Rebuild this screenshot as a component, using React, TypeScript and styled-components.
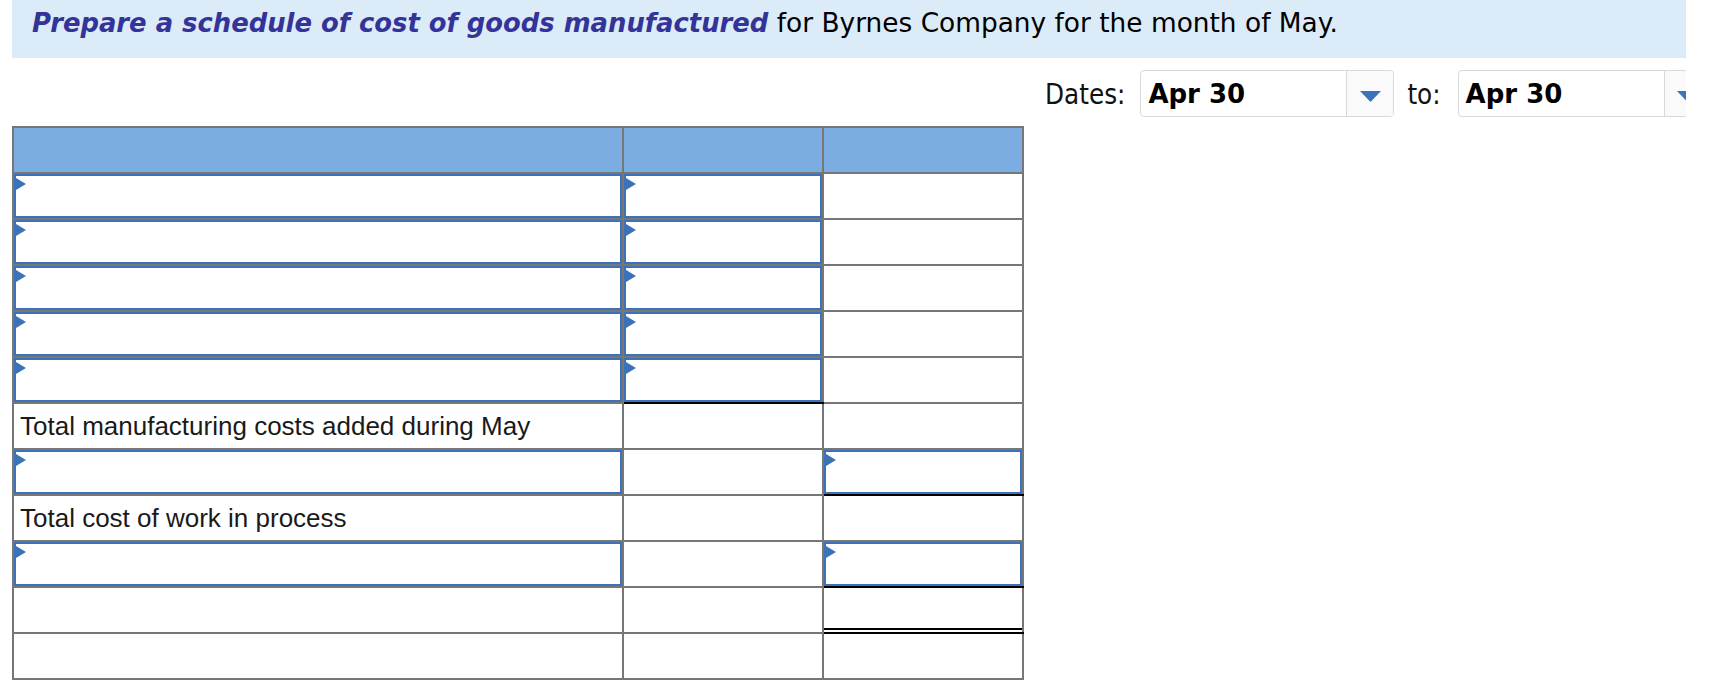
import React from 'react';
import styled, { createGlobalStyle, css } from 'styled-components';

const GlobalStyle = createGlobalStyle`
    html,
    body {
        margin: 0;
        padding: 0;
        background: #fff;
    }
    body {
        font-family: 'Liberation Sans', Arial, sans-serif;
    }
`;

const Page = styled.div`
    width: 1674px;
    margin-left: 12px;
    overflow: hidden;
`;

const Banner = styled.div`
    height: 58px;
    box-sizing: border-box;
    padding: 8px 0 0 20px;
    background-color: #dcebf8;
    font-family: 'DejaVu Sans', Verdana, sans-serif;
    font-size: 26.4px;
    line-height: 30px;
    color: #000;
    white-space: nowrap;
`;

const Lead = styled.span`
    font-size: 25.85px;
    font-weight: bold;
    font-style: italic;
    color: #333399;
`;

const DateBar = styled.div`
    display: flex;
    align-items: center;
    height: 47px;
    margin-top: 12px;
    padding-left: 1033px;
    white-space: nowrap;
`;

const DateLabel = styled.span<{ $gap: number }>`
    flex: none;
    margin-right: ${({ $gap }) => `${$gap}px`};
    font-family: 'DejaVu Sans Condensed', 'DejaVu Sans', sans-serif;
    font-stretch: condensed;
    font-size: 27.5px;
    color: #111;
`;

const Select = styled.div`
    flex: none;
    display: flex;
    width: 254px;
    height: 47px;
    margin-right: 13px;
    box-sizing: border-box;
    border: 1px solid #d9d9d9;
    border-radius: 4px;
    overflow: hidden;
`;

const SelectValue = styled.div`
    flex: 1;
    display: flex;
    align-items: center;
    padding-left: 7px;
    font-family: 'DejaVu Sans', Verdana, sans-serif;
    font-weight: bold;
    font-size: 26px;
    color: #000;
`;

const SelectButton = styled.div`
    flex: none;
    width: 47px;
    display: flex;
    align-items: center;
    justify-content: center;
    padding-top: 5px;
    box-sizing: border-box;
    border-left: 1px solid #d9d9d9;
    background-color: #fafafa;
`;

const Sheet = styled.table`
    margin-top: 9px;
    border-collapse: collapse;
    table-layout: fixed;
    width: 1012px;
`;

const HeadCell = styled.th`
    height: 44px;
    padding: 0;
    border: 2px solid #777;
    background-color: #7badE2;
`;

type ruleType = 'single' | 'double' | undefined;

const Cell = styled.td<{ $rule?: ruleType }>`
    height: 44px;
    padding: 0;
    border: 2px solid #777;
    font-family: 'Liberation Sans', Arial, sans-serif;
    font-size: 26px;
    color: #1a1a1a;
    vertical-align: middle;
    ${({ $rule }) =>
        $rule === 'single'
            ? css`
                  border-bottom-color: #000;
              `
            : ''}
    ${({ $rule }) =>
        $rule === 'double'
            ? css`
                  border-bottom-color: #000;
                  box-shadow: inset 0 -2px 0 #fff, inset 0 -4px 0 #000;
              `
            : ''}
`;

const Label = styled.div`
    padding-left: 6px;
    white-space: nowrap;
`;

const Entry = styled.div`
    position: relative;
    height: 44px;
    box-sizing: border-box;
    border: 2px solid #3a73b8;

    &::before {
        content: '';
        position: absolute;
        top: 2px;
        left: 0;
        border-left: 10px solid #3a73b8;
        border-top: 6px solid transparent;
        border-bottom: 6px solid transparent;
    }
`;

const EntryInput = styled.input`
    display: block;
    width: 100%;
    height: 100%;
    box-sizing: border-box;
    padding: 0 12px;
    border: 0;
    outline: none;
    background: transparent;
    font-family: 'Liberation Sans', Arial, sans-serif;
    font-size: 24px;
`;

type rowType = {
    label?: string;
    entries: boolean[];
    rules: ruleType[];
};

const rows: rowType[] = [
    { entries: [true, true, false], rules: [] },
    { entries: [true, true, false], rules: [] },
    { entries: [true, true, false], rules: [] },
    { entries: [true, true, false], rules: [] },
    { entries: [true, true, false], rules: [undefined, 'single'] },
    { label: 'Total manufacturing costs added during May', entries: [false, false, false], rules: [] },
    { entries: [true, false, true], rules: [undefined, undefined, 'single'] },
    { label: 'Total cost of work in process', entries: [false, false, false], rules: [] },
    { entries: [true, false, true], rules: [undefined, undefined, 'single'] },
    { entries: [false, false, false], rules: [undefined, undefined, 'double'] },
    { entries: [false, false, false], rules: [] },
];

function DateSelect({ value }: { value: string }) {
    return (
        <Select>
            <SelectValue>{value}</SelectValue>
            <SelectButton>
                <svg width="21" height="11" viewBox="0 0 21 11">
                    <polygon points="0,0 21,0 10.5,11" fill="#3a73b8" />
                </svg>
            </SelectButton>
        </Select>
    );
}

function App() {
    return (
        <Page>
            <GlobalStyle />
            <Banner>
                <Lead>Prepare a schedule of cost of goods manufactured</Lead> for Byrnes Company for the month of May.
            </Banner>
            <DateBar>
                <DateLabel $gap={15}>Dates:</DateLabel>
                <DateSelect value="Apr 30" />
                <DateLabel $gap={17}>to:</DateLabel>
                <DateSelect value="Apr 30" />
            </DateBar>
            <Sheet>
                <colgroup>
                    <col style={{ width: 610 }} />
                    <col style={{ width: 200 }} />
                    <col style={{ width: 200 }} />
                </colgroup>
                <thead>
                    <tr>
                        <HeadCell />
                        <HeadCell />
                        <HeadCell />
                    </tr>
                </thead>
                <tbody>
                    {rows.map((row, idx) => (
                        <tr key={idx}>
                            {row.entries.map((isEntry, col) => (
                                <Cell key={col} $rule={row.rules[col]}>
                                    {col === 0 && row.label ? <Label>{row.label}</Label> : null}
                                    {isEntry ? (
                                        <Entry>
                                            <EntryInput type="text" />
                                        </Entry>
                                    ) : null}
                                </Cell>
                            ))}
                        </tr>
                    ))}
                </tbody>
            </Sheet>
        </Page>
    );
}

export default App;
